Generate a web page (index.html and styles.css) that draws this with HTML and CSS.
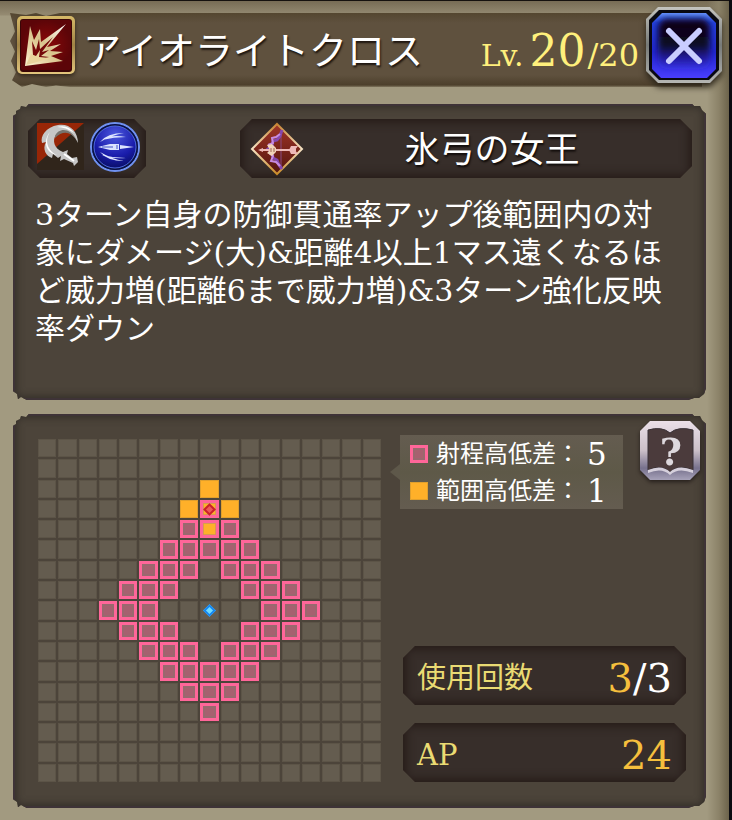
FILE: index.html
```html
<!DOCTYPE html>
<html lang="ja">
<head>
<meta charset="utf-8">
<meta name="viewport" content="width=device-width, initial-scale=1">
<title>アイオライトクロス</title>
<link rel="stylesheet" href="styles.css">
</head>
<body>
<main class="screen">
  <header class="header">
    <svg class="skill-icon" viewBox="0 0 60 60" aria-hidden="true">
      <defs>
        <linearGradient id="gold" x1="0" y1="0" x2="0" y2="1"><stop offset="0" stop-color="#d6b968"/><stop offset=".5" stop-color="#a08345"/><stop offset="1" stop-color="#e3c67d"/></linearGradient>
        <radialGradient id="red"><stop offset="0" stop-color="#8d0808"/><stop offset="1" stop-color="#5c0508"/></radialGradient>
        <linearGradient id="bone" x1="0" y1="1" x2="1" y2="0"><stop offset="0" stop-color="#fff4d0"/><stop offset=".5" stop-color="#d8c28b"/><stop offset="1" stop-color="#fff"/></linearGradient>
      </defs>
      <rect x="1" y="1" width="58" height="58" rx="5" fill="url(#gold)"/>
      <rect x="4" y="4" width="52" height="53" rx="3" fill="#3a0506"/>
      <rect x="5" y="5" width="50" height="50" rx="2" fill="url(#red)"/>
      <path d="M9 51 14 11 18 25 24 14 25 27 50 9 31 32 45 29 34 36 47 37 35 41 47 46Z" fill="url(#bone)"/>
      <path d="M17 40 16 26 20 35 23 24 24 34 37 22 26 37 33 35 25 41 33 42 19 46Z" fill="#750709"/>
      <path d="M10 50 15 39 20 41 24 35 23 42 34 43 21 47Z" fill="#ead49c"/>
    </svg>
    <h1 class="title">アイオライトクロス</h1>
    <p class="level"><span class="level-label">Lv.</span><span class="level-now">20</span><span class="level-max">/20</span></p>
    <button class="close" type="button" aria-label="閉じる">
      <svg viewBox="0 0 76 76" aria-hidden="true">
        <defs>
          <linearGradient id="steel" x1="0" y1="0" x2="0" y2="1"><stop offset="0" stop-color="#c4c4bf"/><stop offset=".5" stop-color="#777a78"/><stop offset="1" stop-color="#b5b6b3"/></linearGradient>
          <linearGradient id="blue" x1="0" y1="0" x2="0" y2="1"><stop offset="0" stop-color="#6492ff"/><stop offset=".15" stop-color="#2440e0"/><stop offset=".6" stop-color="#2226d0"/><stop offset="1" stop-color="#493eff"/></linearGradient>
          <linearGradient id="night" x1="0" y1="0" x2="0" y2="1"><stop offset="0" stop-color="#0c0615"/><stop offset=".55" stop-color="#0e0722"/><stop offset="1" stop-color="#2b22b8" stop-opacity=".4"/></linearGradient>
          <filter id="soft" x="-20%" y="-20%" width="140%" height="140%"><feGaussianBlur stdDeviation="3"/></filter>
        </defs>
        <path d="M12 0H64L76 12V64L64 76H12L0 64V12Z" fill="url(#steel)"/>
        <path d="M13 3H63L73 13V63L63 73H13L3 63V13Z" fill="#090912"/>
        <path d="M16 6H60L70 16V62L61 71H15L6 62V16Z" fill="url(#blue)"/>
        <path d="M18 12H58L64 18V54L58 60H18L12 54V18Z" fill="url(#night)" filter="url(#soft)"/>
        <path d="M23 24 53 54M53 24 23 54" stroke="#c9cdff" stroke-width="6" stroke-linecap="round"/>
      </svg>
    </button>
  </header>

  <section class="panel summary">
    <div class="tags">
      <div class="plate types">
        <svg class="type-icon" viewBox="0 0 47 47" aria-hidden="true">
          <path d="M0 0H47V47H0Z" fill="#30251b"/><path d="M0 0H47L0 41Z" fill="#982607"/>
          <path d="M41 20C41 8 32 0 21 2 9 4 3 13 5 20L9 19C5 26 9 33 15 35L16 31 21 35 24 33 23 38 27 36 36 40 37 43 41 39 40 34 35 35 30 31 31 27 26 29C17 26 15 17 19 12 26 5 36 9 41 20Z" fill="#c6c6c6"/>
          <path d="M18 13C21 5 33 4 39 16 33 8 25 8 18 15Z" fill="#77736e"/>
          <path d="M13 9C7 18 11 28 20 32 8 30 6 17 13 9ZM20 4Q31 1 37 10 29 4 20 4Z" fill="#fff"/>
          <path d="M27 31 37 38" stroke="#fff" stroke-width="2"/>
        </svg>
        <svg class="type-icon round" viewBox="0 0 50 50" aria-hidden="true">
          <defs><radialGradient id="orb" cx=".5" cy=".25" r=".75"><stop offset="0" stop-color="#4b57df"/><stop offset=".6" stop-color="#191caa"/><stop offset="1" stop-color="#060b58"/></radialGradient></defs>
          <circle cx="25" cy="25" r="24" fill="url(#orb)" stroke="#6f91ef" stroke-width="2"/>
          <circle cx="25" cy="25" r="22" fill="none" stroke="#0a123f" stroke-width="2"/>
          <circle cx="25" cy="25" r="21" fill="none" stroke="#4f6ae0" stroke-width="1"/>
          <path d="M8 25 20 22H29V28H20ZM30 23 44 25 30 27ZM10 20Q17 11 34 11 22 13 10 20ZM10 30Q17 39 34 39 22 37 10 30ZM12 18Q20 12 36 15 24 15 12 18ZM12 33Q20 37 36 36 24 36 12 33Z" fill="#dce4ff"/>
          <path d="M12 25H23M27 23V27" stroke="#4053c8"/>
        </svg>
      </div>
      <div class="plate owner">
        <svg class="owner-icon" viewBox="0 0 54 54" aria-hidden="true">
          <defs>
            <linearGradient id="ruby" x1="0" y1="0" x2="0" y2="1"><stop offset="0" stop-color="#a03526"/><stop offset="1" stop-color="#53150f"/></linearGradient>
            <linearGradient id="frame" x1="0" y1="0" x2="0" y2="1"><stop offset="0" stop-color="#c78533"/><stop offset=".5" stop-color="#f6e3c5"/><stop offset="1" stop-color="#c98b28"/></linearGradient>
          </defs>
          <path d="M27 2 52 27 27 52 2 27Z" fill="url(#ruby)" stroke="url(#frame)" stroke-width="2"/>
          <path d="M31 9V46" stroke="#8a4a80" stroke-width="1"/>
          <path d="M32 8 30 14 27 18 23 19 22 24 18 27 22 31 23 36 27 38 29 43 32 47" fill="none" stroke="#8548ad" stroke-width="3"/>
          <path d="M30 12 26 15 22 16 23 21 18 23M19 31 23 34 21 39 26 40 30 44" fill="none" stroke="#c78be0" stroke-width="2"/>
          <path d="M10 28H46" stroke="#edb9b7" stroke-width="2"/>
          <path d="M8 28 13 26V30ZM39 28 41 24H48L45 28 48 32H41Z" fill="#edb9b7"/>
          <path d="M17 23 22 22 26 26V30L22 34 17 31 20 28Z" fill="#f1d4b9"/><path d="M21 26V30M24 26V30" stroke="#a16a55"/>
        </svg>
        <h2 class="owner-name">氷弓の女王</h2>
      </div>
    </div>
    <p class="description">3ターン自身の防御貫通率アップ後範囲内の対<br>象にダメージ(大)&amp;距離4以上1マス遠くなるほ<br>ど威力増(距離6まで威力増)&amp;3ターン強化反映<br>率ダウン</p>
  </section>

  <section class="panel detail">
    <div class="board" id="board"></div>
    <div class="side">
      <div class="side-top">
        <dl class="legend">
          <dt><span class="cell range"></span>射程高低差：</dt><dd>5</dd>
          <dt><span class="cell area"></span>範囲高低差：</dt><dd>1</dd>
        </dl>
        <button class="help" type="button" aria-label="ヘルプ">
          <svg viewBox="0 0 60 60" aria-hidden="true">
            <defs><linearGradient id="silver" x1="0" y1="0" x2="0" y2="1"><stop offset="0" stop-color="#eadfe8"/><stop offset=".5" stop-color="#cbbfc8"/><stop offset=".8" stop-color="#77718d"/><stop offset="1" stop-color="#a7a2b9"/></linearGradient></defs>
            <path d="M10 0H50L60 10V49L50 59H10L0 49V10Z" fill="url(#silver)"/>
            <path d="M8 9Q22 5 30 12 38 5 53 9V49Q38 43 30 51 22 43 8 49Z" fill="#4b3b3c" stroke="#393137" stroke-width="1"/>
            <path d="M8 49Q22 43 30 51 38 43 53 49V52Q38 46 30 54 22 46 8 52Z" fill="#d6d0dc"/>
            <text class="help-mark" x="31" y="44" text-anchor="middle">?</text>
          </svg>
        </button>
      </div>
      <dl class="stats">
        <div class="plate stat"><dt>使用回数</dt><dd>3<span class="stat-max">/3</span></dd></div>
        <div class="plate stat"><dt>AP</dt><dd>24</dd></div>
      </dl>
    </div>
  </section>
</main>
<script src="board.js"></script>
</body>
</html>
```
FILE: styles.css
```css
* { box-sizing: border-box; }

body {
  margin: 0;
  background: #0b0b10;
  color: #fff;
  font-family: "DejaVu Serif", "Noto Sans CJK JP", serif;
}

h1, h2, p, dl, dd { margin: 0; font-weight: 400; }

button { padding: 0; border: 0; background: none; cursor: pointer; }
svg { display: block; width: 100%; height: auto; overflow: visible; }

.screen {
  min-height: 100vh;
  margin-right: 3px;
  padding: 6px 23px 12px 13px;
  border-top: 1px solid #15110e;
  background:
    linear-gradient(to right, transparent calc(100% - 22px), #8b8268 calc(100% - 10px), #6c634b),
    linear-gradient(#776c55, #958b72 14px, #a29a80 15px);
}

.header {
  position: relative;
  display: flex;
  align-items: center;
  height: 76px;
  margin: 0 -16px 21px 3px;
  isolation: isolate;
}

.header::before {
  content: "";
  position: absolute;
  z-index: -1;
  inset: 6px 20px -4px -6px;
  background: linear-gradient(#54462f, #5f513e 10px, #5f513e 62px, #4d402c 72px, #80765e);
  clip-path: polygon(0 0, 16px 2px, 26px 0, 36px 3px, 50px 0, 100% 0, 100% 100%, 60px 100%, 46px 98%, 36px 100%, 22px 96%, 12px 100%, 2px 91%, 6px 80%, 1px 65%, 5px 52%, 0 38%, 5px 25%);
}

.skill-icon { width: 60px; filter: drop-shadow(0 2px 2px #2f2418); }

.title {
  flex: 1;
  margin-left: 7px;
  padding-top: 12px;
  font-size: 38px;
  line-height: 56px;
  white-space: nowrap;
  text-shadow: 1px 2px 2px #1b140e;
}

.level {
  display: flex;
  align-items: baseline;
  margin-right: 7px;
  padding-top: 16px;
  color: #fff07c;
  line-height: 56px;
}

.level-label { margin-right: 6px; font-size: 30px; }
.level-now { margin-right: 2px; font-size: 44px; }
.level-max { font-size: 32px; }
.close { width: 76px; filter: drop-shadow(0 4px 3px #2b2418); }

.panel {
  background: #4c443a;
  box-shadow: inset 0 0 0 2px #3e3337, inset 0 0 8px 3px #302b26;
  clip-path: polygon(0 12px, 3px 10px, 3px 7px, 7px 5px, 8px 2px, 13px 3px, 16px 0, calc(100% - 14px) 0, calc(100% - 12px) 2px, calc(100% - 6px) 2px, calc(100% - 4px) 6px, 100% 10px, 100% calc(100% - 12px), calc(100% - 2px) calc(100% - 6px), calc(100% - 7px) calc(100% - 2px), calc(100% - 12px) calc(100% - 2px), calc(100% - 18px) 100%, 14px 100%, 8px calc(100% - 3px), 5px calc(100% - 1px), 4px calc(100% - 6px), 0 calc(100% - 9px));
}

.summary {
  min-height: 296px;
  margin-bottom: 14px;
  padding: 15px 14px 20px 15px;
}

.tags { display: flex; justify-content: space-between; gap: 24px; }

.plate {
  display: flex;
  align-items: center;
  height: 59px;
  background: #372e2a;
  box-shadow: inset 0 0 10px 3px #261b17;
  clip-path: polygon(12px 0, calc(100% - 12px) 0, 100% 12px, 100% calc(100% - 12px), calc(100% - 12px) 100%, 12px 100%, 0 calc(100% - 12px), 0 12px);
}

.types { gap: 6px; padding: 0 6px 4px 9px; }
.type-icon { width: 47px; }
.type-icon.round { width: 50px; }

.owner { flex: 0 1 452px; padding: 0 12px 0 10px; }
.owner-icon { flex: none; width: 54px; }

.owner-name {
  flex: 1;
  padding-top: 2px;
  font-size: 35px;
  line-height: 56px;
  text-align: center;
  text-shadow: 1px 2px 2px #100b09;
}

.description {
  margin: 18px 0 0 7px;
  font-size: 30px;
  line-height: 38px;
}

.detail {
  display: grid;
  grid-template-columns: 343fr 300fr;
  gap: 19px;
  padding: 7px 6px 26px 25px;
}

.board {
  display: grid;
  grid-template-columns: repeat(17, 1fr);
  grid-template-rows: repeat(17, 1fr);
  gap: 2px;
  aspect-ratio: 1;
  margin-top: 18px;
}

.cell {
  display: flex;
  align-items: center;
  justify-content: center;
  background: #645c4f;
  box-shadow: inset 0 0 0 1px #5c5447;
}

.area { background: #ffb029; box-shadow: inset 0 0 0 1px #e09f2d; }
.range { background: #a6616f; box-shadow: inset 0 0 0 3px #ff6699, inset 0 0 0 5px #99696e; }
.range.area { background: #ffb029; box-shadow: inset 0 0 0 3px #ff6699, inset 0 0 0 4px #d79b50; }

.marker { width: 9px; height: 9px; rotate: 45deg; border: 2px solid #1686f0; background: #6fdcff; }
.marker.target { border-color: #c92229; background: #f05758; }

.side { display: flex; flex-direction: column; justify-content: space-between; }
.side-top { display: flex; align-items: flex-start; justify-content: space-between; }

.legend {
  position: relative;
  display: grid;
  grid-template-columns: auto 36px;
  align-items: center;
  width: 223px;
  margin-top: 14px;
  padding: 0 0 0 10px;
  background: linear-gradient(#645c50, #5e5948 50%, #645c50);
}

.legend::before {
  content: "";
  position: absolute;
  top: 29px;
  right: 100%;
  border: solid transparent;
  border-width: 8px 10px 8px 0;
  border-right-color: #5e584a;
}

.legend dt { display: flex; align-items: center; gap: 8px; padding-top: 1px; font-size: 24px; line-height: 36px; white-space: nowrap; }
.legend dd { font-size: 31px; line-height: 36px; }
.legend .cell { width: 18px; height: 18px; }

.help { width: 60px; filter: drop-shadow(0 2px 2px #241d1a); }
.help-mark { fill: #ddd8dd; font: 700 38px "DejaVu Serif", serif; }

.stats { display: grid; gap: 18px; margin: 0 14px 0 3px; }
.stat { justify-content: space-between; padding: 5px 14px 0 14px; }
.stat dt { color: #eadb73; font-size: 29px; line-height: 56px; }
.stat dd { color: #f5bf3d; font-size: 40px; line-height: 56px; }
.stat-max { color: #fff; }
```
FILE: board.js
```js
const SIZE = 17;
const CENTER = 8;
const TARGET_ROW = 3;
const board = document.getElementById("board");

for (let row = 0; row < SIZE; row++) {
  for (let col = 0; col < SIZE; col++) {
    const cell = document.createElement("span");
    cell.className = "cell";
    const distance = Math.abs(row - CENTER) + Math.abs(col - CENTER);
    const spread = Math.abs(row - TARGET_ROW) + Math.abs(col - CENTER);
    if (distance >= 3 && distance <= 5) cell.classList.add("range");
    if (spread <= 1) cell.classList.add("area");
    if (distance === 0 || spread === 0) {
      const marker = document.createElement("i");
      marker.className = spread === 0 ? "marker target" : "marker";
      cell.append(marker);
    }
    board.append(cell);
  }
}
```
